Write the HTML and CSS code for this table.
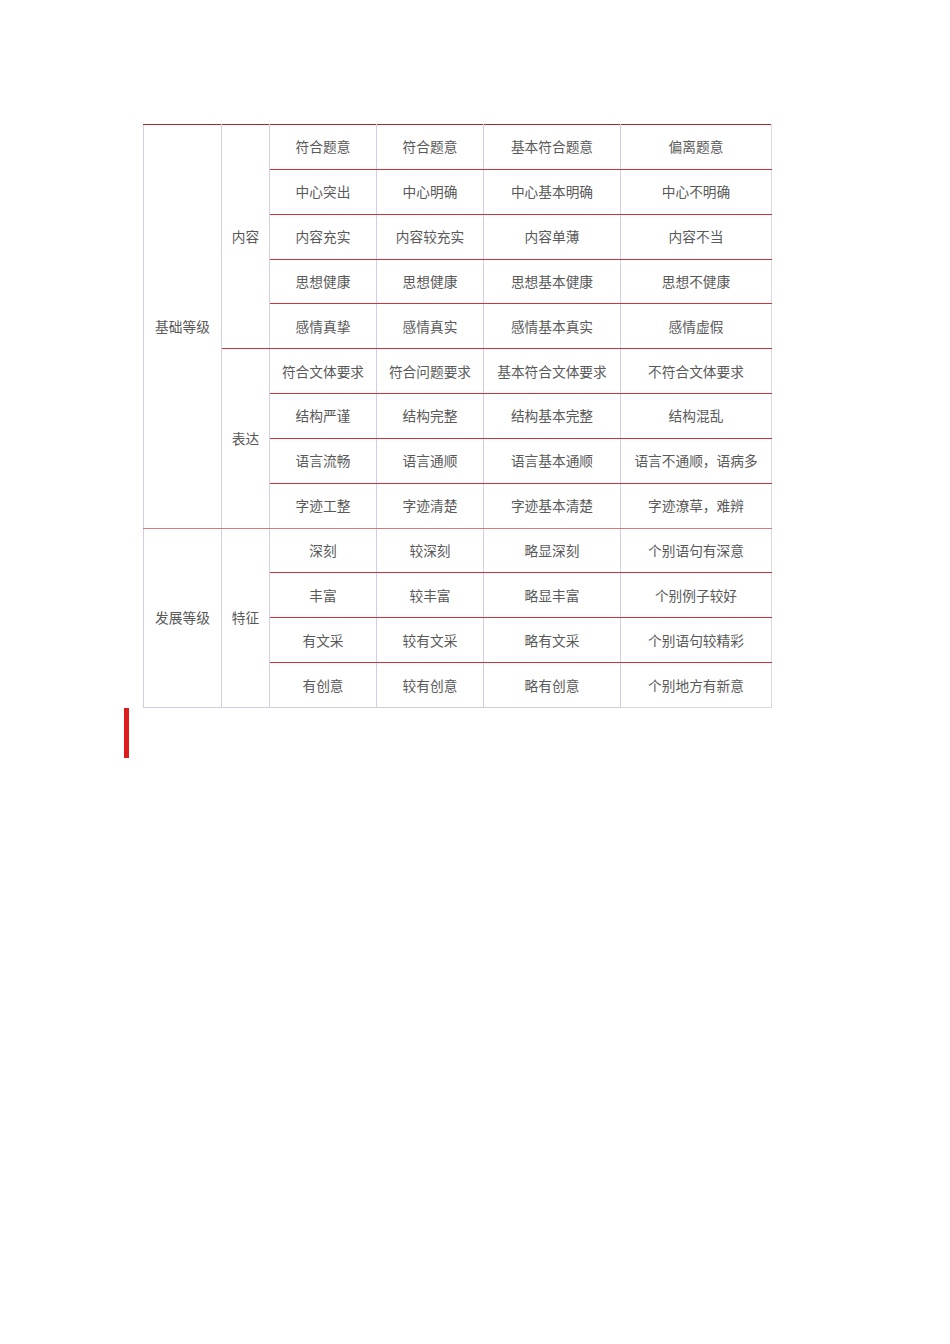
FILE: index.html
```html
<!DOCTYPE html>
<html lang="zh">
<head>
<meta charset="utf-8">
<title>评分标准</title>
<link rel="stylesheet" href="styles.css">
</head>
<body>
<div class="page">
  <table class="grid">
    <colgroup>
      <col class="c1"><col class="c2"><col class="c3"><col class="c4"><col class="c5"><col class="c6">
    </colgroup>
    <tbody>
      <tr class="first">
        <td class="lbl lbl-end" rowspan="9">基础等级</td>
        <td class="lbl lbl-split" rowspan="5">内容</td>
        <td>符合题意</td><td>符合题意</td><td>基本符合题意</td><td class="last">偏离题意</td>
      </tr>
      <tr><td>中心突出</td><td>中心明确</td><td>中心基本明确</td><td class="last">中心不明确</td></tr>
      <tr><td>内容充实</td><td>内容较充实</td><td>内容单薄</td><td class="last">内容不当</td></tr>
      <tr><td>思想健康</td><td>思想健康</td><td>思想基本健康</td><td class="last">思想不健康</td></tr>
      <tr><td>感情真挚</td><td>感情真实</td><td>感情基本真实</td><td class="last">感情虚假</td></tr>
      <tr>
        <td class="lbl lbl-mid lbl-end" rowspan="4">表达</td>
        <td>符合文体要求</td><td>符合问题要求</td><td>基本符合文体要求</td><td class="last">不符合文体要求</td>
      </tr>
      <tr><td>结构严谨</td><td>结构完整</td><td>结构基本完整</td><td class="last">结构混乱</td></tr>
      <tr><td>语言流畅</td><td>语言通顺</td><td>语言基本通顺</td><td class="last">语言不通顺，语病多</td></tr>
      <tr class="pre"><td>字迹工整</td><td>字迹清楚</td><td>字迹基本清楚</td><td class="last">字迹潦草，难辨</td></tr>
      <tr class="sec">
        <td class="lbl" rowspan="4">发展等级</td>
        <td class="lbl" rowspan="4">特征</td>
        <td>深刻</td><td>较深刻</td><td>略显深刻</td><td class="last">个别语句有深意</td>
      </tr>
      <tr><td>丰富</td><td>较丰富</td><td>略显丰富</td><td class="last">个别例子较好</td></tr>
      <tr><td>有文采</td><td>较有文采</td><td>略有文采</td><td class="last">个别语句较精彩</td></tr>
      <tr class="end"><td>有创意</td><td>较有创意</td><td>略有创意</td><td class="last">个别地方有新意</td></tr>
    </tbody>
  </table>
  <div class="bar"></div>
</div>
</body>
</html>
```
FILE: styles.css
```css
html, body {
  margin: 0;
  padding: 0;
  background: #ffffff;
}
.page {
  padding: 124px 0 0 124px;
}
.grid {
  margin-left: 19px;
  width: 629px;
  border-collapse: collapse;
  table-layout: fixed;
  font-family: "Noto Sans CJK SC", "Noto Sans", sans-serif;
  font-size: 13.7px;
  color: #595959;
}
.c1 { width: 78px; }
.c2 { width: 48px; }
.c3 { width: 107px; }
.c4 { width: 107px; }
.c5 { width: 137px; }
.c6 { width: 151px; }
.grid td {
  height: 42.85px;
  padding: 0 0 1px 0;
  text-align: center;
  vertical-align: middle;
  border-left: 1px solid #d2cde3;
  border-right: 1px solid #d2cde3;
  border-top: 1px solid #c9343f;
  border-bottom: 1px solid #c9343f;
  line-height: 16px;
}
.grid td.lbl {
  border-top-color: #d2cde3;
  border-bottom-color: #d2cde3;
}
.grid td.lbl-mid,
.grid td.lbl-split {
  border-bottom-color: #c9343f;
}
.grid td.lbl-mid {
  border-top-color: #c9343f;
}
.grid td.lbl-end,
.grid tr.pre td {
  border-bottom-color: #d77a80;
}
.grid td.last {
  border-right-color: #dcdcdc;
}
.grid tr.first td {
  border-top: 1px solid #a8262e;
}
.grid tr.sec td {
  border-top: 1px solid #d77a80;
}
.grid tr.end td {
  border-bottom: 1px solid #cfcbd9;
}
.grid tr.end td.last {
  border-bottom-color: #d6d6d6;
}
.bar {
  width: 5px;
  height: 50px;
  margin-top: 0;
  background: #e01b1b;
}
```
